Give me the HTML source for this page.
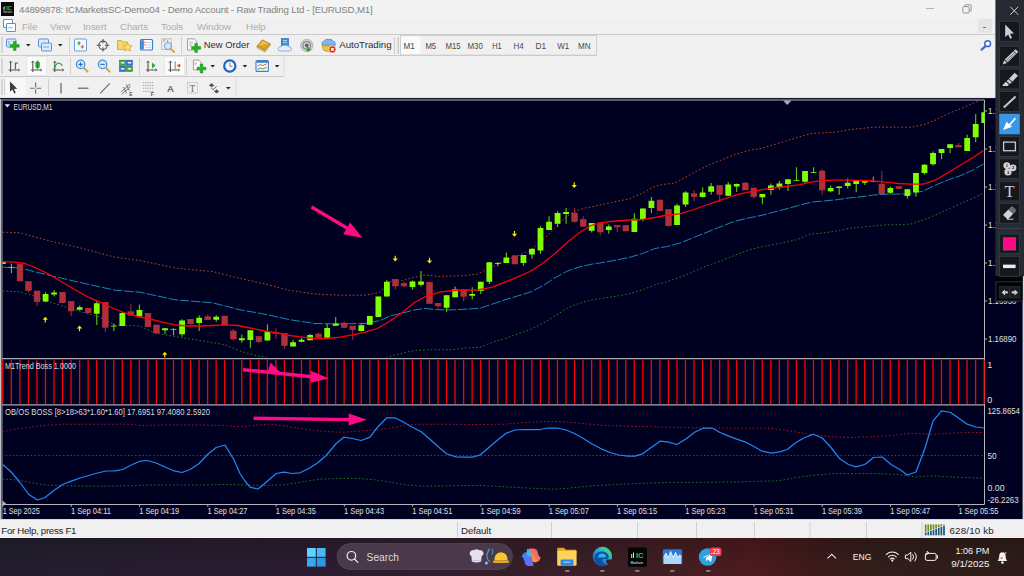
<!DOCTYPE html>
<html lang="en"><head><meta charset="utf-8"><title>EURUSD,M1</title>
<style>
*{box-sizing:border-box;margin:0;padding:0}
html,body{width:1024px;height:576px;overflow:hidden;background:#f0f0f0;font-family:"Liberation Sans",sans-serif}
.abs{position:absolute}
.t{font-family:"Liberation Sans","DejaVu Sans",sans-serif}
#title{left:0;top:0;width:995px;height:18px;background:#f3f3f3}
#title .txt{left:19px;top:3.7px;font-size:9.7px;line-height:12px;color:#828282;white-space:nowrap;letter-spacing:-0.19px}
#menu{left:0;top:18px;width:995px;height:16px;background:#f0f0f0}
#menu span{position:absolute;top:2.6px;font-size:9.7px;line-height:12px;color:#adadad;white-space:nowrap;letter-spacing:-0.1px}
.hl{position:absolute;left:0;width:995px;height:1px;background:#cbcbcb}
.vsep{position:absolute;width:1px;background:#c8c8c8}
.grip{position:absolute;width:2px;border-left:1px solid #bdbdbd;}
.tb{position:absolute;left:0;width:995px;height:21px}
.tf{position:absolute;top:42px;font-size:8.6px;line-height:10px;color:#444;white-space:nowrap}
#status{left:0;top:519px;width:1024px;height:19px;background:#f0f0f0;border-top:1px solid #d8d8d8}
#status span{position:absolute;top:4.6px;font-size:9.7px;line-height:12px;color:#222;white-space:nowrap;letter-spacing:-0.1px}
#task{left:0;top:538px;width:1024px;height:38px;background:linear-gradient(180deg,rgba(0,0,0,.16),rgba(0,0,0,0) 75%),linear-gradient(90deg,#221e2e 0%,#2a1c30 29%,#301e2e 40%,#341e2a 49%,#3e1e24 63%,#4c1a1e 74%,#3c1a1a 80%,#321e1b 85%,#2e1c19 100%)}
#rt{left:995px;top:0;width:29px;height:276px}
.rb{position:absolute;left:4px;width:21px;height:20px;background:#121218;border:1px solid #34343c}
</style></head><body>

<div id="title" class="abs">
 <svg class="abs" style="left:1px;top:2px" width="13" height="14" viewBox="0 0 13 14"><rect width="13" height="14" fill="#0a0a0a"/><text x="5.2" y="7.6" font-size="5.6" font-weight="bold" fill="#35c435" class="t">IC</text><rect x="2.2" y="5" width="0.8" height="2.6" fill="#bbb"/><rect x="3.4" y="4" width="0.8" height="3.6" fill="#bbb"/><text x="2.2" y="11.2" font-size="2.6" fill="#ddd" class="t">Markets</text></svg>
 <div class="abs txt">44899878: ICMarketsSC-Demo04 - Demo Account - Raw Trading Ltd - [EURUSD,M1]</div>
 <div class="abs" style="left:926px;top:8px;width:8px;height:1px;background:#b4b4b4"></div>
 <svg class="abs" style="left:962px;top:4px" width="10" height="10" viewBox="0 0 10 10" fill="none" stroke="#8a8a8a" stroke-width="0.9"><rect x="0.8" y="2.6" width="6.4" height="6.4" rx="1"/><path d="M2.8 2.4 V1.6 Q2.8 0.8 3.8 0.8 H8.2 Q9.2 0.8 9.2 1.8 V6.2 Q9.2 7.2 8.2 7.2 H7.4"/></svg>
</div>
<div id="menu" class="abs">
 <svg class="abs" style="left:3px;top:0px" width="14" height="14" viewBox="0 0 14 14" fill="#fff" stroke="#5b8fd0" stroke-width="1"><rect x="0.5" y="1.5" width="9" height="8" rx="0.5"/><rect x="3.5" y="5.5" width="9" height="8" rx="0.5"/><path d="M5 10.5 l1.5-1.6 1.5 1.6 1.5-1.6" fill="none" stroke-width="0.8"/></svg>
 <span style="left:22px">File</span><span style="left:50px">View</span><span style="left:83px">Insert</span><span style="left:120px">Charts</span><span style="left:161px">Tools</span><span style="left:197px">Window</span><span style="left:246px">Help</span>
 <div class="abs" style="left:978px;top:0.8px;width:14.2px;height:14.2px;background:#e5e5e5"></div>
 <div class="abs" style="left:982.5px;top:9px;width:3px;height:1px;background:#6b7fb0"></div>
</div>
<div class="hl" style="top:34px"></div>
<div class="hl" style="top:55px;width:597px"></div>
<div class="hl" style="top:76px;width:284px"></div>
<div class="abs" style="left:0;top:97px;width:995px;height:1px;background:#e4e4e4"></div>

<svg class="abs" style="left:0;top:35px" width="995" height="63" viewBox="0 35 995 63">
<defs>
 <path id="dd" d="M0 0 h4.6 l-2.3 2.6 z" fill="#222"/>
 <g id="plus"><path d="M3.2 0 h2.6 v3.2 h3.2 v2.6 h-3.2 v3.2 h-2.6 v-3.2 h-3.2 v-2.6 h3.2 z" fill="#21b321" stroke="#158a15" stroke-width="0.5"/></g>
 <g id="axes" fill="none" stroke="#555" stroke-width="1.1"><path d="M2 0 V11 M0 9 H11"/><path d="M0.6 1.6 L2 0 L3.4 1.6 M9.6 7.8 L11 9 L9.6 10.2" stroke-width="0.8"/></g>
</defs>
<!-- grips -->
<g fill="#bcbcbc"><rect x="1.5" y="37" width="1" height="16"/><rect x="1.5" y="58" width="1" height="16"/><rect x="1.5" y="79" width="1" height="16"/><rect x="4" y="79" width="1" height="16" fill="#d0d0d0"/></g>
<!-- separators -->
<g fill="#cfcfcf"><rect x="69" y="37" width="1" height="17"/><rect x="181" y="37" width="1" height="17"/><rect x="394" y="37" width="1" height="17"/><rect x="397.6" y="37" width="1.2" height="17" fill="#c4c4c4"/>
<rect x="70" y="58" width="1" height="17"/><rect x="139" y="58" width="1" height="17"/><rect x="186" y="58" width="1" height="17"/><rect x="283.5" y="56" width="1" height="20" fill="#dcdcdc"/>
<rect x="48" y="79" width="1" height="17"/><rect x="235.5" y="77" width="1" height="20" fill="#dcdcdc"/></g>
<!-- ===== row 1 ===== -->
<!-- new chart -->
<g><rect x="6.5" y="39" width="9.5" height="8" rx="1" fill="#dbe9f9" stroke="#5a93d6"/><path d="M8 42h2M8 44h2" stroke="#5a93d6" stroke-width="0.8"/><use href="#plus" x="10.2" y="41.4"/></g>
<use href="#dd" x="26" y="44"/>
<!-- profiles -->
<g fill="#dbe9f9" stroke="#5a93d6"><rect x="38.5" y="39" width="10" height="8" rx="1"/><rect x="41.5" y="43" width="10" height="8" rx="1"/><path d="M43 47h6" stroke-width="0.8"/></g>
<use href="#dd" x="58" y="44"/>
<!-- market watch -->
<g><rect x="74.5" y="39" width="12" height="12" rx="1" fill="#f4f9ff" stroke="#6aa0dc"/><path d="M77 43.5 l2-2.2 2 2.2 z" fill="#29a329"/><path d="M80.4 46.6 l2 2.2 2-2.2 z" fill="#e05a2a"/><rect x="78.3" y="43.5" width="1.4" height="1.6" fill="#29a329"/><rect x="81.7" y="45" width="1.4" height="1.6" fill="#e05a2a"/></g>
<!-- crosshair -->
<g fill="none" stroke="#555" stroke-width="1.1"><circle cx="103" cy="45.3" r="4.2"/><path d="M103 39v4.2M103 47.4v4.2M96.8 45.3h4.2M105 45.3h4.2"/></g>
<!-- folder star -->
<g><path d="M117.5 40.5 h4 l1 1.4 h5 v7.6 h-10 z" fill="#f6d66b" stroke="#c9a227" stroke-width="0.8"/><path d="M127.6 42.6 l1.4 2.9 3.1 .4 -2.3 2.1 .6 3.1 -2.8 -1.5 -2.8 1.5 .6 -3.1 -2.3 -2.1 3.1 -.4 z" fill="#fbe070" stroke="#c9a227" stroke-width="0.7"/></g>
<!-- navigator -->
<g><rect x="140.5" y="39.5" width="12" height="10.5" rx="1" fill="#fafcff" stroke="#3e7fc8" stroke-width="1.2"/><rect x="141.2" y="40.2" width="2.6" height="9.2" fill="#3e7fc8"/><path d="M145.5 42.5h5.5M145.5 45h5.5M145.5 47.5h5.5" stroke="#b8c4d4" stroke-width="0.7"/><rect x="144.3" y="41.8" width="1" height="1" fill="#d33"/><rect x="144.3" y="44.4" width="1" height="1" fill="#d33"/></g>
<!-- strategy tester -->
<g><rect x="161.8" y="38.8" width="9.5" height="10.8" fill="#f4f0e8" stroke="#b9b2a4" stroke-width="0.8"/><path d="M164 42v-2.2h1.6M167.6 40v2.6" stroke="#6a8fc0" stroke-width="0.8" fill="none"/><circle cx="168" cy="46" r="3.6" fill="#cfe4fa" fill-opacity="0.85" stroke="#6e9fd8" stroke-width="1"/><path d="M170.8 48.8 l3.4 3.2" stroke="#d6a62c" stroke-width="1.8" stroke-linecap="round"/></g>
<!-- new order -->
<g><path d="M187.5 38.8 h6.6 l2.6 2.6 v8.6 h-9.2 z" fill="#fbfbfb" stroke="#8a8a8a" stroke-width="0.8"/><path d="M189.2 42h4M189.2 44h3M189.2 46h3" stroke="#9a9a9a" stroke-width="0.7"/><use href="#plus" x="191.6" y="43.4"/></g>
<text x="203.8" y="48.4" font-size="9.8" fill="#2e2e2e" class="t" textLength="45.6" lengthAdjust="spacingAndGlyphs">New Order</text>
<!-- gold book -->
<g><path d="M257 46.200 l5.400-6.400 7.600 4 -5.200 6.600 z" fill="#d9a424" stroke="#9c7212" stroke-width="0.700"/><path d="M258.600 45.800 l4.400-5 5.400 2.800z" fill="#f0cc5c" fill-opacity="0.8"/><path d="M257 46.200 l.4 1.800 7.600 4 5.400-6.800 -.4-1.400 -5.200 6.600z" fill="#f3dea0" stroke="#9c7212" stroke-width="0.600"/></g>
<!-- person/cloud -->
<g><rect x="281.400" y="38.600" width="7" height="7.200" fill="#3c8fe4" stroke="#2a6cc0" stroke-width="0.700"/><path d="M283 40.600h4M283 42.400h4" stroke="#cfe4fb" stroke-width="0.800"/><path d="M280 51 q-2.400-.4-1.800-2.600 q.6-1.800 2.800-1.400 q1-2.400 3.800-1.600 q2.400-1 3.600 1.400 q3.200-.2 3.200 2.200 q0 1.800-2 2z" fill="#e6eef8" stroke="#7d9fd0" stroke-width="0.800"/></g>
<!-- signals -->
<g fill="none"><circle cx="306.8" cy="45.4" r="6.2" fill="#c9ccd0" stroke="#9aa0a6" stroke-width="0.6"/><circle cx="306.8" cy="45.4" r="4" stroke="#7a8087" stroke-width="1"/><circle cx="306.8" cy="45.4" r="1.8" fill="#5c6268"/><path d="M306.8 45.4 v6.4 a6.4 6.4 0 0 0 4.4-1.8 z" fill="#2fa52f"/></g>
<!-- autotrading -->
<g><path d="M322.6 45.2 q-1.8-3.4 1.8-4.2 q1.2-2.6 4.4-1.6 q3.2-.8 4 1.8 q3.4 .4 2.2 4 z" fill="#7fb6ec" stroke="#3f7fc6" stroke-width="0.7"/><path d="M322 44.6 q3 2 6.6 1.2 q2.6 2.8 6.6-.6 l-1.4 4.600 q-5.800 3.4 -10.600 0 z" fill="#f0c33c" stroke="#b48a1a" stroke-width="0.7"/><circle cx="332.4" cy="49.4" r="3.6" fill="#e0301e" stroke="#fff" stroke-width="0.6"/><rect x="331" y="48" width="2.8" height="2.8" fill="#fff"/></g>
<text x="339.2" y="48.4" font-size="9.8" fill="#2e2e2e" class="t" textLength="52.4" lengthAdjust="spacingAndGlyphs">AutoTrading</text>
<!-- timeframe box -->
<rect x="400.5" y="35.5" width="196" height="19.6" fill="none" stroke="#cdcdcd" stroke-width="0.9"/>
<rect x="401" y="36" width="19.4" height="18" fill="#fafafa"/>
<g font-size="9.2" fill="#4a4a4a" class="t">
<text x="403.4" y="48.8" textLength="11.4" lengthAdjust="spacingAndGlyphs">M1</text>
<text x="425.4" y="48.8" textLength="10.8" lengthAdjust="spacingAndGlyphs">M5</text>
<text x="445.4" y="48.8" textLength="15.2" lengthAdjust="spacingAndGlyphs">M15</text>
<text x="467.4" y="48.8" textLength="15.4" lengthAdjust="spacingAndGlyphs">M30</text>
<text x="492.2" y="48.8" textLength="9.6" lengthAdjust="spacingAndGlyphs">H1</text>
<text x="513.4" y="48.8" textLength="10.2" lengthAdjust="spacingAndGlyphs">H4</text>
<text x="535.4" y="48.8" textLength="10.6" lengthAdjust="spacingAndGlyphs">D1</text>
<text x="557.2" y="48.8" textLength="12" lengthAdjust="spacingAndGlyphs">W1</text>
<text x="578" y="48.8" textLength="12.6" lengthAdjust="spacingAndGlyphs">MN</text>
</g>
<!-- search -->
<g><circle cx="987.7" cy="43.7" r="2.9" fill="#f4f8ff" stroke="#3a68c8" stroke-width="1.5"/><path d="M985.4 46.200 l-3.800 3.400" stroke="#3a68c8" stroke-width="2.200" stroke-linecap="round"/></g>
<!-- ===== row 2 ===== -->
<rect x="26.4" y="56.6" width="20.4" height="19" fill="#fafafa" stroke="#dedede" stroke-width="0.6"/>
<rect x="164.4" y="56.6" width="20" height="19" fill="#fafafa" stroke="#dedede" stroke-width="0.6"/>
<use href="#axes" x="8.600" y="61"/><path d="M15.400 69.600v-6.400h2.400" fill="none" stroke="#1c9a2c" stroke-width="1.3"/>
<use href="#axes" x="30.800" y="61"/><rect x="35.800" y="61.800" width="3.600" height="6" rx="1" fill="#22b534" stroke="#138a22" stroke-width="0.6"/><path d="M37.600 60.400v9" stroke="#138a22" stroke-width="0.8"/>
<use href="#axes" x="52.800" y="61"/><path d="M54 69 q3.600-10 8.400-3.200" fill="none" stroke="#1c9a2c" stroke-width="1.1"/>
<!-- zoom in/out -->
<g><circle cx="80.600" cy="64.400" r="4.200" fill="#d6e9fb" stroke="#4a8fd8" stroke-width="1.3"/><path d="M78.400 64.400h4.400M80.600 62.200v4.400" stroke="#2f74c4" stroke-width="1.2"/><path d="M84 68 l3.600 3.600" stroke="#d7a52a" stroke-width="2" stroke-linecap="round"/></g>
<g><circle cx="102.600" cy="64.400" r="4.200" fill="#d6e9fb" stroke="#4a8fd8" stroke-width="1.3"/><path d="M100.400 64.400h4.400" stroke="#2f74c4" stroke-width="1.200"/><path d="M106 68 l3.600 3.600" stroke="#d7a52a" stroke-width="2" stroke-linecap="round"/></g>
<!-- tile -->
<g stroke-width="0.6"><rect x="119.600" y="60.200" width="6" height="5" fill="#46a83e" stroke="#2a7a26"/><rect x="126.400" y="60.200" width="6" height="5" fill="#3c78d8" stroke="#2454a8"/><rect x="119.600" y="66" width="6" height="5.400" fill="#3c78d8" stroke="#2454a8"/><rect x="126.400" y="66" width="6" height="5.400" fill="#46a83e" stroke="#2a7a26"/><path d="M121 62.800h3.400M127.800 62.800h3.400M121 68.800h3.400M127.800 68.800h3.400" stroke="#e8f0ff" stroke-width="1.400"/></g>
<!-- auto scroll / shift -->
<use href="#axes" x="146" y="61"/><path d="M152 62.400 v6 l3.600-3z" fill="#22b534"/>
<use href="#axes" x="168.400" y="61"/><path d="M175.200 61.400v8" stroke="#4a8fd8" stroke-width="1"/><path d="M180.200 63.400 v4.400 l-3.400-2.200z" fill="#d84a22"/>
<!-- indicators -->
<g><path d="M193.400 60 h5.400 l2.400 2.400 v7.400 h-7.800 z" fill="#fbfbfb" stroke="#8a8a8a" stroke-width="0.800"/><path d="M195 65.400 v-2.600 M195 63 h2" stroke="#999" stroke-width="0.7"/><use href="#plus" x="197" y="64"/></g>
<use href="#dd" x="210.400" y="65"/>
<!-- clock -->
<g><circle cx="229.800" cy="66" r="5.600" fill="#f4f8fc" stroke="#1f63c0" stroke-width="2.200"/><path d="M229.800 62.600v3.600h2.800" fill="none" stroke="#777" stroke-width="0.900"/></g>
<use href="#dd" x="242.600" y="65"/>
<!-- templates -->
<g><rect x="256" y="60.600" width="12.400" height="10.800" rx="1" fill="#f4f9ff" stroke="#3e7fc8" stroke-width="1.100"/><rect x="256.400" y="61" width="11.600" height="1.800" fill="#3e7fc8"/><path d="M257.600 66 l2.600-1.600 2.600 1.200 3.800-1.600" fill="none" stroke="#d8522a" stroke-width="0.9"/><path d="M257.600 69.400 l2.600-1.400 2.600 1 3.800-1.600" fill="none" stroke="#2a9a3a" stroke-width="0.9"/></g>
<use href="#dd" x="274.800" y="65"/>
<!-- ===== row 3 ===== -->
<rect x="5.400" y="78" width="20" height="19" fill="#f8f8f8"/>
<path d="M10 81.400 v10.400 l2.400-2.200 1.800 4 1.600-.8 -1.800-3.800 3.200-.2 z" fill="#3c3c3c"/>
<path d="M35.600 82.600v11.200M30 88.200h11.200" stroke="#6c6c6c" stroke-width="1.100"/><rect x="34.600" y="87.200" width="2" height="2" fill="#f0f0f0"/>
<path d="M61 83v10.400" stroke="#6c6c6c" stroke-width="1.300"/>
<path d="M78 88.200h10.400" stroke="#6c6c6c" stroke-width="1.300"/>
<path d="M100.200 93.400 L109.800 83.400" stroke="#6c6c6c" stroke-width="1.200"/>
<g stroke="#666" stroke-width="0.9" fill="none"><path d="M121 92 l9-8M121.600 94.400 l9-8M123.600 87 l3 6.400 M126.400 84.400 l3 6.400"/></g><text x="129.200" y="95.600" font-size="5" font-weight="bold" fill="#555" class="t">E</text>
<g stroke="#8a8a8a" stroke-width="0.8" stroke-dasharray="1 0.8"><path d="M143 82.600h11M143 85.400h11M143 88.200h11M143 91.400h11"/></g><text x="150.800" y="95.800" font-size="5" font-weight="bold" fill="#555" class="t">F</text>
<text x="167" y="92" font-size="9.6" font-weight="bold" fill="#6a6a6a" class="t">A</text>
<rect x="187.600" y="82.600" width="10" height="10.600" fill="none" stroke="#9a9a9a" stroke-width="0.800" stroke-dasharray="1 1"/><text x="189.400" y="92" font-size="9.500" fill="#6a6a6a" class="t" style="font-family:'Liberation Serif',serif">T</text>
<g fill="#555"><path d="M209 85.400 l2.600-2.400 2.600 2.400 -2.600 1.800z"/><path d="M214 91.600 l2.600-2.400 2.600 2.400 -2.600 1.800z"/><path d="M211.400 87.800 l1.600 2 3.600-3.400" fill="none" stroke="#555" stroke-width="0.9"/></g>
<use href="#dd" x="226" y="87"/>
</svg>

<svg class="chart" width="1024" height="422" viewBox="0 98 1024 422" style="position:absolute;left:0;top:98px">
<rect x="0" y="98" width="1024" height="422" fill="#000020"/>
<rect x="0" y="98" width="1.2" height="422" fill="#c4c4c8"/>
<rect x="0" y="98" width="995" height="1" fill="#1a1a30"/>
<rect x="1022.6" y="276" width="1.4" height="244" fill="#dcdcdc"/>
<defs><clipPath id="cm"><rect x="2.5" y="100.5" width="982" height="257"/></clipPath><clipPath id="ci"><rect x="2.5" y="405.5" width="982" height="99"/></clipPath></defs>
<g stroke="#b4b4bc" stroke-width="1" fill="none">
<path d="M2 100 H984.5"/>
<path d="M2 99.5 V519" stroke="#9a9aa6"/>
<path d="M984.5 100 V504.5"/>
<path d="M2 358.6 H984.5" stroke-width="1.4" stroke="#aaaab4"/>
<path d="M2 404.9 H984.5" stroke-width="1.4" stroke="#aaaab4"/>
<path d="M2 504.5 H984.5"/>
</g>
<g clip-path="url(#cm)">
<polyline points="2.5,232.2 20.0,232.8 50.0,241.0 82.5,248.5 115.0,257.2 140.0,260.5 175.0,268.0 212.5,271.5 240.0,278.5 265.0,284.0 290.0,290.5 315.0,294.0 340.0,295.2 365.0,295.2 380.0,292.2 390.0,281.5 402.5,280.5 415.0,277.2 425.0,275.0 440.0,276.5 452.5,276.0 465.0,275.5 477.5,274.0 492.5,266.8 505.0,260.5 517.5,255.8 530.0,250.5 542.5,240.5 555.0,227.8 565.0,217.8 575.0,211.2 585.0,208.0 595.0,206.2 605.0,203.8 617.5,201.2 630.0,198.8 642.5,193.0 655.0,186.2 662.5,184.5 675.0,183.0 685.0,177.5 697.5,170.5 710.0,164.5 722.5,159.5 736.0,154.0 748.5,150.5 761.0,148.5 773.5,144.8 786.0,141.0 798.5,137.2 811.0,133.5 823.5,132.8 836.0,132.2 848.5,129.8 861.0,128.5 873.5,127.2 886.0,127.2 898.5,127.2 911.0,127.2 923.5,124.8 936.0,119.8 948.5,113.5 961.0,108.5 973.5,103.0 979.8,100.5" fill="none" stroke="#b84a1a" stroke-width="1" stroke-dasharray="1.6 2.2"/>
<polyline points="2.5,291.0 20.0,291.8 32.5,295.5 50.0,302.2 82.5,312.2 100.0,317.2 115.0,325.2 140.0,326.0 155.0,333.0 175.0,336.5 200.0,340.5 225.0,344.8 240.0,351.0 255.0,355.5 268.0,357.5" fill="none" stroke="#247e2a" stroke-width="1" stroke-dasharray="1.6 2.2"/>
<polyline points="386.0,357.5 390.0,356.5 402.5,353.0 415.0,350.5 427.5,349.8 452.5,349.8 465.0,348.0 480.0,347.2 492.5,342.2 505.0,338.5 517.5,334.0 530.0,329.8 542.5,323.5 555.0,316.0 567.5,308.0 580.0,303.0 592.5,299.8 605.0,298.0 617.5,296.0 630.0,293.5 642.5,289.8 655.0,284.8 667.5,281.5 680.0,277.2 692.5,272.2 705.0,266.5 717.5,262.2 730.0,257.2 736.0,254.8 748.5,250.0 761.0,247.0 773.5,244.5 786.0,242.0 796.0,240.0 811.0,234.0 823.5,233.0 836.0,231.0 848.5,228.5 861.0,227.2 873.5,226.0 886.0,224.8 898.5,224.8 911.0,224.0 923.5,219.8 936.0,214.8 948.5,209.0 961.0,203.5 973.5,198.0 983.5,193.0" fill="none" stroke="#247e2a" stroke-width="1" stroke-dasharray="1.6 2.2"/>
<polyline points="2.5,267.2 20.0,268.0 50.0,275.5 82.5,283.0 115.0,290.2 140.0,292.2 175.0,299.8 212.5,302.8 240.0,309.8 265.0,314.2 290.0,319.8 315.0,323.5 340.0,324.0 365.0,323.5 380.0,320.5 390.0,316.0 402.5,313.0 415.0,309.8 425.0,308.5 440.0,309.8 452.5,309.8 465.0,309.2 480.0,308.2 492.5,304.0 505.0,299.8 517.5,296.0 530.0,292.2 542.5,286.0 555.0,277.8 567.5,271.0 580.0,266.8 592.5,264.0 605.0,262.2 617.5,259.8 630.0,257.2 642.5,253.5 655.0,248.5 667.5,246.5 680.0,243.0 692.5,238.0 705.0,233.0 717.5,228.0 730.0,223.0 736.0,221.0 748.5,218.0 761.0,215.5 773.5,212.2 786.0,209.0 798.5,205.5 811.0,202.2 823.5,201.0 836.0,199.8 848.5,198.0 861.0,196.8 873.5,195.0 886.0,194.2 898.5,194.0 911.0,193.5 923.5,191.0 936.0,184.8 948.5,179.8 961.0,175.5 973.5,169.8 983.5,164.0" fill="none" stroke="#1787b2" stroke-width="1" stroke-dasharray="9.5 1.8"/>
<rect x="2.35" y="261.75" width="1.1" height="2.25" fill="#60c810"/>
<rect x="0.00" y="261.75" width="5.8" height="2.25" fill="#80ff00"/>
<rect x="10.88" y="263.50" width="1.1" height="9.50" fill="#60c810"/>
<rect x="8.53" y="266.90" width="5.8" height="0.80" fill="#80ff00"/>
<rect x="19.42" y="264.25" width="1.1" height="16.75" fill="#962c3c"/>
<rect x="17.07" y="264.25" width="5.8" height="16.75" fill="#aa3238" stroke="#c82a40" stroke-width="0.5"/>
<rect x="27.95" y="281.50" width="1.1" height="11.00" fill="#962c3c"/>
<rect x="25.60" y="281.50" width="5.8" height="9.00" fill="#aa3238" stroke="#c82a40" stroke-width="0.5"/>
<rect x="36.48" y="291.00" width="1.1" height="15.00" fill="#962c3c"/>
<rect x="34.13" y="291.00" width="5.8" height="10.75" fill="#aa3238" stroke="#c82a40" stroke-width="0.5"/>
<rect x="45.02" y="292.25" width="1.1" height="10.00" fill="#60c810"/>
<rect x="42.67" y="294.00" width="5.8" height="7.50" fill="#80ff00"/>
<rect x="53.55" y="290.00" width="1.1" height="6.50" fill="#60c810"/>
<rect x="51.20" y="292.50" width="5.8" height="2.00" fill="#80ff00"/>
<rect x="62.08" y="292.25" width="1.1" height="10.50" fill="#962c3c"/>
<rect x="59.73" y="292.25" width="5.8" height="10.50" fill="#aa3238" stroke="#c82a40" stroke-width="0.5"/>
<rect x="70.62" y="301.25" width="1.1" height="14.75" fill="#962c3c"/>
<rect x="68.27" y="301.25" width="5.8" height="9.75" fill="#aa3238" stroke="#c82a40" stroke-width="0.5"/>
<rect x="79.15" y="305.50" width="1.1" height="5.00" fill="#60c810"/>
<rect x="76.80" y="307.25" width="5.8" height="2.50" fill="#80ff00"/>
<rect x="87.68" y="308.25" width="1.1" height="5.75" fill="#962c3c"/>
<rect x="85.33" y="308.25" width="5.8" height="4.50" fill="#aa3238" stroke="#c82a40" stroke-width="0.5"/>
<rect x="96.22" y="301.00" width="1.1" height="24.00" fill="#60c810"/>
<rect x="93.87" y="303.25" width="5.8" height="10.50" fill="#80ff00"/>
<rect x="104.75" y="302.25" width="1.1" height="30.00" fill="#962c3c"/>
<rect x="102.40" y="302.25" width="5.8" height="25.00" fill="#aa3238" stroke="#c82a40" stroke-width="0.5"/>
<rect x="113.28" y="323.50" width="1.1" height="7.50" fill="#60c810"/>
<rect x="110.93" y="325.70" width="5.8" height="0.80" fill="#80ff00"/>
<rect x="121.82" y="312.25" width="1.1" height="13.75" fill="#60c810"/>
<rect x="119.47" y="313.00" width="5.8" height="13.00" fill="#80ff00"/>
<rect x="130.35" y="304.00" width="1.1" height="11.25" fill="#962c3c"/>
<rect x="128.00" y="311.75" width="5.8" height="3.50" fill="#aa3238" stroke="#c82a40" stroke-width="0.5"/>
<rect x="138.88" y="304.50" width="1.1" height="13.25" fill="#60c810"/>
<rect x="136.53" y="310.00" width="5.8" height="6.50" fill="#80ff00"/>
<rect x="147.42" y="313.25" width="1.1" height="13.50" fill="#962c3c"/>
<rect x="145.07" y="313.25" width="5.8" height="13.50" fill="#aa3238" stroke="#c82a40" stroke-width="0.5"/>
<rect x="155.95" y="325.00" width="1.1" height="9.25" fill="#962c3c"/>
<rect x="153.60" y="325.00" width="5.8" height="8.00" fill="#aa3238" stroke="#c82a40" stroke-width="0.5"/>
<rect x="164.48" y="328.25" width="1.1" height="5.75" fill="#60c810"/>
<rect x="162.13" y="328.25" width="5.8" height="2.00" fill="#80ff00"/>
<rect x="173.02" y="328.50" width="1.1" height="7.00" fill="#60c810"/>
<rect x="170.67" y="328.90" width="5.8" height="0.80" fill="#80ff00"/>
<rect x="181.55" y="319.25" width="1.1" height="17.25" fill="#60c810"/>
<rect x="179.20" y="320.50" width="5.8" height="13.75" fill="#80ff00"/>
<rect x="190.08" y="319.25" width="1.1" height="5.75" fill="#962c3c"/>
<rect x="187.73" y="319.25" width="5.8" height="4.50" fill="#aa3238" stroke="#c82a40" stroke-width="0.5"/>
<rect x="198.62" y="315.50" width="1.1" height="15.50" fill="#60c810"/>
<rect x="196.27" y="317.75" width="5.8" height="5.25" fill="#80ff00"/>
<rect x="207.15" y="314.50" width="1.1" height="5.25" fill="#962c3c"/>
<rect x="204.80" y="316.75" width="5.8" height="3.00" fill="#aa3238" stroke="#c82a40" stroke-width="0.5"/>
<rect x="215.68" y="315.25" width="1.1" height="6.50" fill="#60c810"/>
<rect x="213.33" y="316.75" width="5.8" height="3.00" fill="#80ff00"/>
<rect x="224.22" y="316.00" width="1.1" height="9.25" fill="#962c3c"/>
<rect x="221.87" y="316.00" width="5.8" height="9.25" fill="#aa3238" stroke="#c82a40" stroke-width="0.5"/>
<rect x="232.75" y="329.00" width="1.1" height="11.25" fill="#962c3c"/>
<rect x="230.40" y="331.00" width="5.8" height="8.00" fill="#aa3238" stroke="#c82a40" stroke-width="0.5"/>
<rect x="241.28" y="334.50" width="1.1" height="8.25" fill="#60c810"/>
<rect x="238.93" y="338.25" width="5.8" height="2.00" fill="#80ff00"/>
<rect x="249.82" y="330.25" width="1.1" height="17.50" fill="#60c810"/>
<rect x="247.47" y="330.25" width="5.8" height="9.75" fill="#80ff00"/>
<rect x="258.35" y="336.50" width="1.1" height="7.00" fill="#962c3c"/>
<rect x="256.00" y="336.50" width="5.8" height="5.25" fill="#aa3238" stroke="#c82a40" stroke-width="0.5"/>
<rect x="266.88" y="324.25" width="1.1" height="16.25" fill="#60c810"/>
<rect x="264.53" y="331.00" width="5.8" height="9.50" fill="#80ff00"/>
<rect x="275.42" y="328.50" width="1.1" height="10.50" fill="#962c3c"/>
<rect x="273.07" y="332.50" width="5.8" height="1.00" fill="#aa3238" stroke="#c82a40" stroke-width="0.5"/>
<rect x="283.95" y="333.50" width="1.1" height="15.00" fill="#962c3c"/>
<rect x="281.60" y="333.50" width="5.8" height="12.00" fill="#aa3238" stroke="#c82a40" stroke-width="0.5"/>
<rect x="292.48" y="339.75" width="1.1" height="6.75" fill="#60c810"/>
<rect x="290.13" y="342.25" width="5.8" height="4.25" fill="#80ff00"/>
<rect x="301.02" y="337.25" width="1.1" height="5.00" fill="#60c810"/>
<rect x="298.67" y="339.75" width="5.8" height="2.00" fill="#80ff00"/>
<rect x="309.55" y="334.00" width="1.1" height="6.25" fill="#60c810"/>
<rect x="307.20" y="335.00" width="5.8" height="5.25" fill="#80ff00"/>
<rect x="318.08" y="332.75" width="1.1" height="5.25" fill="#962c3c"/>
<rect x="315.73" y="334.00" width="5.8" height="3.25" fill="#aa3238" stroke="#c82a40" stroke-width="0.5"/>
<rect x="326.62" y="324.00" width="1.1" height="13.75" fill="#60c810"/>
<rect x="324.27" y="328.00" width="5.8" height="9.75" fill="#80ff00"/>
<rect x="335.15" y="317.00" width="1.1" height="9.00" fill="#60c810"/>
<rect x="332.80" y="323.50" width="5.8" height="2.25" fill="#80ff00"/>
<rect x="343.68" y="321.50" width="1.1" height="6.50" fill="#962c3c"/>
<rect x="341.33" y="323.00" width="5.8" height="4.50" fill="#aa3238" stroke="#c82a40" stroke-width="0.5"/>
<rect x="352.22" y="326.00" width="1.1" height="13.75" fill="#962c3c"/>
<rect x="349.87" y="326.00" width="5.8" height="3.75" fill="#aa3238" stroke="#c82a40" stroke-width="0.5"/>
<rect x="360.75" y="324.00" width="1.1" height="7.50" fill="#60c810"/>
<rect x="358.40" y="325.25" width="5.8" height="5.75" fill="#80ff00"/>
<rect x="369.28" y="316.00" width="1.1" height="8.75" fill="#60c810"/>
<rect x="366.93" y="316.00" width="5.8" height="8.75" fill="#80ff00"/>
<rect x="377.82" y="296.50" width="1.1" height="20.50" fill="#60c810"/>
<rect x="375.47" y="296.50" width="5.8" height="20.50" fill="#80ff00"/>
<rect x="386.35" y="279.75" width="1.1" height="16.75" fill="#60c810"/>
<rect x="384.00" y="281.75" width="5.8" height="14.75" fill="#80ff00"/>
<rect x="394.88" y="279.25" width="1.1" height="10.00" fill="#962c3c"/>
<rect x="392.53" y="279.25" width="5.8" height="6.75" fill="#aa3238" stroke="#c82a40" stroke-width="0.5"/>
<rect x="403.42" y="281.50" width="1.1" height="5.75" fill="#962c3c"/>
<rect x="401.07" y="283.50" width="5.8" height="2.50" fill="#aa3238" stroke="#c82a40" stroke-width="0.5"/>
<rect x="411.95" y="280.50" width="1.1" height="9.00" fill="#60c810"/>
<rect x="409.60" y="281.50" width="5.8" height="5.50" fill="#80ff00"/>
<rect x="420.48" y="271.00" width="1.1" height="15.50" fill="#60c810"/>
<rect x="418.13" y="281.50" width="5.8" height="3.25" fill="#80ff00"/>
<rect x="429.01" y="282.25" width="1.1" height="21.25" fill="#962c3c"/>
<rect x="426.67" y="282.25" width="5.8" height="21.25" fill="#aa3238" stroke="#c82a40" stroke-width="0.5"/>
<rect x="437.55" y="303.25" width="1.1" height="5.25" fill="#962c3c"/>
<rect x="435.20" y="303.25" width="5.8" height="2.75" fill="#aa3238" stroke="#c82a40" stroke-width="0.5"/>
<rect x="446.08" y="295.25" width="1.1" height="17.00" fill="#60c810"/>
<rect x="443.73" y="295.25" width="5.8" height="12.50" fill="#80ff00"/>
<rect x="454.61" y="286.50" width="1.1" height="10.75" fill="#60c810"/>
<rect x="452.26" y="289.25" width="5.8" height="8.00" fill="#80ff00"/>
<rect x="463.15" y="289.75" width="1.1" height="11.75" fill="#962c3c"/>
<rect x="460.80" y="289.75" width="5.8" height="6.75" fill="#aa3238" stroke="#c82a40" stroke-width="0.5"/>
<rect x="471.68" y="287.25" width="1.1" height="12.00" fill="#60c810"/>
<rect x="469.33" y="294.00" width="5.8" height="1.75" fill="#80ff00"/>
<rect x="480.21" y="281.75" width="1.1" height="12.25" fill="#60c810"/>
<rect x="477.86" y="281.75" width="5.8" height="9.25" fill="#80ff00"/>
<rect x="488.75" y="262.25" width="1.1" height="21.75" fill="#60c810"/>
<rect x="486.40" y="262.25" width="5.8" height="19.50" fill="#80ff00"/>
<rect x="497.28" y="262.00" width="1.1" height="4.25" fill="#60c810"/>
<rect x="494.93" y="263.10" width="5.8" height="0.90" fill="#80ff00"/>
<rect x="505.81" y="252.50" width="1.1" height="10.50" fill="#60c810"/>
<rect x="503.46" y="257.50" width="5.8" height="5.50" fill="#80ff00"/>
<rect x="514.35" y="255.75" width="1.1" height="8.25" fill="#962c3c"/>
<rect x="512.00" y="255.75" width="5.8" height="8.25" fill="#aa3238" stroke="#c82a40" stroke-width="0.5"/>
<rect x="522.88" y="255.00" width="1.1" height="10.75" fill="#60c810"/>
<rect x="520.53" y="255.00" width="5.8" height="8.00" fill="#80ff00"/>
<rect x="531.41" y="248.75" width="1.1" height="10.00" fill="#60c810"/>
<rect x="529.06" y="248.75" width="5.8" height="5.75" fill="#80ff00"/>
<rect x="539.95" y="226.25" width="1.1" height="27.50" fill="#60c810"/>
<rect x="537.60" y="228.00" width="5.8" height="22.50" fill="#80ff00"/>
<rect x="548.48" y="216.25" width="1.1" height="13.75" fill="#60c810"/>
<rect x="546.13" y="221.75" width="5.8" height="8.25" fill="#80ff00"/>
<rect x="557.01" y="211.25" width="1.1" height="15.75" fill="#60c810"/>
<rect x="554.66" y="213.00" width="5.8" height="10.75" fill="#80ff00"/>
<rect x="565.55" y="208.00" width="1.1" height="15.75" fill="#60c810"/>
<rect x="563.20" y="212.00" width="5.8" height="2.00" fill="#80ff00"/>
<rect x="574.08" y="208.00" width="1.1" height="14.50" fill="#962c3c"/>
<rect x="571.73" y="213.00" width="5.8" height="8.50" fill="#aa3238" stroke="#c82a40" stroke-width="0.5"/>
<rect x="582.61" y="216.25" width="1.1" height="10.75" fill="#962c3c"/>
<rect x="580.26" y="219.50" width="5.8" height="6.75" fill="#aa3238" stroke="#c82a40" stroke-width="0.5"/>
<rect x="591.15" y="223.00" width="1.1" height="9.50" fill="#60c810"/>
<rect x="588.80" y="223.00" width="5.8" height="7.75" fill="#80ff00"/>
<rect x="599.68" y="223.00" width="1.1" height="12.50" fill="#962c3c"/>
<rect x="597.33" y="223.00" width="5.8" height="9.00" fill="#aa3238" stroke="#c82a40" stroke-width="0.5"/>
<rect x="608.21" y="224.50" width="1.1" height="9.25" fill="#60c810"/>
<rect x="605.86" y="226.50" width="5.8" height="3.50" fill="#80ff00"/>
<rect x="616.75" y="225.50" width="1.1" height="6.50" fill="#962c3c"/>
<rect x="614.40" y="225.50" width="5.8" height="1.50" fill="#aa3238" stroke="#c82a40" stroke-width="0.5"/>
<rect x="625.28" y="225.50" width="1.1" height="5.50" fill="#962c3c"/>
<rect x="622.93" y="225.50" width="5.8" height="5.50" fill="#aa3238" stroke="#c82a40" stroke-width="0.5"/>
<rect x="633.81" y="213.25" width="1.1" height="18.75" fill="#60c810"/>
<rect x="631.46" y="218.75" width="5.8" height="13.25" fill="#80ff00"/>
<rect x="642.35" y="208.50" width="1.1" height="12.75" fill="#60c810"/>
<rect x="640.00" y="208.50" width="5.8" height="11.00" fill="#80ff00"/>
<rect x="650.88" y="197.00" width="1.1" height="16.00" fill="#60c810"/>
<rect x="648.53" y="200.75" width="5.8" height="7.25" fill="#80ff00"/>
<rect x="659.41" y="200.00" width="1.1" height="10.75" fill="#962c3c"/>
<rect x="657.06" y="200.00" width="5.8" height="10.75" fill="#aa3238" stroke="#c82a40" stroke-width="0.5"/>
<rect x="667.95" y="209.50" width="1.1" height="17.50" fill="#962c3c"/>
<rect x="665.60" y="209.50" width="5.8" height="16.25" fill="#aa3238" stroke="#c82a40" stroke-width="0.5"/>
<rect x="676.48" y="203.75" width="1.1" height="21.25" fill="#60c810"/>
<rect x="674.13" y="205.50" width="5.8" height="19.50" fill="#80ff00"/>
<rect x="685.01" y="191.25" width="1.1" height="15.75" fill="#60c810"/>
<rect x="682.66" y="192.50" width="5.8" height="12.00" fill="#80ff00"/>
<rect x="693.55" y="190.00" width="1.1" height="11.25" fill="#962c3c"/>
<rect x="691.20" y="193.75" width="5.8" height="3.00" fill="#aa3238" stroke="#c82a40" stroke-width="0.5"/>
<rect x="702.08" y="187.50" width="1.1" height="10.00" fill="#60c810"/>
<rect x="699.73" y="192.50" width="5.8" height="4.50" fill="#80ff00"/>
<rect x="710.61" y="183.00" width="1.1" height="11.50" fill="#60c810"/>
<rect x="708.26" y="186.25" width="5.8" height="5.50" fill="#80ff00"/>
<rect x="719.15" y="185.50" width="1.1" height="17.00" fill="#962c3c"/>
<rect x="716.80" y="185.50" width="5.8" height="9.00" fill="#aa3238" stroke="#c82a40" stroke-width="0.5"/>
<rect x="727.68" y="182.00" width="1.1" height="14.25" fill="#60c810"/>
<rect x="725.33" y="184.50" width="5.8" height="11.25" fill="#80ff00"/>
<rect x="736.21" y="183.50" width="1.1" height="8.50" fill="#60c810"/>
<rect x="733.86" y="184.00" width="5.8" height="2.50" fill="#80ff00"/>
<rect x="744.75" y="182.00" width="1.1" height="8.00" fill="#962c3c"/>
<rect x="742.40" y="183.00" width="5.8" height="7.00" fill="#aa3238" stroke="#c82a40" stroke-width="0.5"/>
<rect x="753.28" y="188.00" width="1.1" height="10.50" fill="#962c3c"/>
<rect x="750.93" y="188.00" width="5.8" height="8.75" fill="#aa3238" stroke="#c82a40" stroke-width="0.5"/>
<rect x="761.81" y="194.00" width="1.1" height="10.25" fill="#60c810"/>
<rect x="759.46" y="194.00" width="5.8" height="3.25" fill="#80ff00"/>
<rect x="770.35" y="183.50" width="1.1" height="11.25" fill="#60c810"/>
<rect x="768.00" y="185.50" width="5.8" height="4.50" fill="#80ff00"/>
<rect x="778.88" y="181.00" width="1.1" height="8.75" fill="#60c810"/>
<rect x="776.53" y="183.50" width="5.8" height="4.00" fill="#80ff00"/>
<rect x="787.41" y="179.25" width="1.1" height="11.75" fill="#60c810"/>
<rect x="785.06" y="179.25" width="5.8" height="4.75" fill="#80ff00"/>
<rect x="795.95" y="167.25" width="1.1" height="13.75" fill="#60c810"/>
<rect x="793.60" y="179.90" width="5.8" height="0.80" fill="#80ff00"/>
<rect x="804.48" y="171.00" width="1.1" height="12.50" fill="#60c810"/>
<rect x="802.13" y="171.00" width="5.8" height="10.75" fill="#80ff00"/>
<rect x="813.01" y="167.25" width="1.1" height="5.65" fill="#60c810"/>
<rect x="810.66" y="172.20" width="5.8" height="0.80" fill="#80ff00"/>
<rect x="821.55" y="169.25" width="1.1" height="25.50" fill="#962c3c"/>
<rect x="819.20" y="171.00" width="5.8" height="19.00" fill="#aa3238" stroke="#c82a40" stroke-width="0.5"/>
<rect x="830.08" y="185.50" width="1.1" height="6.75" fill="#60c810"/>
<rect x="827.73" y="188.00" width="5.8" height="3.25" fill="#80ff00"/>
<rect x="838.61" y="186.50" width="1.1" height="8.25" fill="#60c810"/>
<rect x="836.26" y="186.50" width="5.8" height="1.50" fill="#80ff00"/>
<rect x="847.15" y="178.50" width="1.1" height="10.00" fill="#60c810"/>
<rect x="844.80" y="182.75" width="5.8" height="3.25" fill="#80ff00"/>
<rect x="855.68" y="181.00" width="1.1" height="11.25" fill="#60c810"/>
<rect x="853.33" y="181.00" width="5.8" height="3.00" fill="#80ff00"/>
<rect x="864.21" y="180.50" width="1.1" height="4.50" fill="#60c810"/>
<rect x="861.86" y="181.00" width="5.8" height="1.75" fill="#80ff00"/>
<rect x="872.75" y="176.75" width="1.1" height="5.50" fill="#60c810"/>
<rect x="870.40" y="181.20" width="5.8" height="0.80" fill="#80ff00"/>
<rect x="881.28" y="171.00" width="1.1" height="23.00" fill="#962c3c"/>
<rect x="878.93" y="184.00" width="5.8" height="10.00" fill="#aa3238" stroke="#c82a40" stroke-width="0.5"/>
<rect x="889.81" y="186.50" width="1.1" height="7.75" fill="#60c810"/>
<rect x="887.46" y="188.00" width="5.8" height="4.75" fill="#80ff00"/>
<rect x="898.35" y="186.50" width="1.1" height="2.00" fill="#962c3c"/>
<rect x="896.00" y="186.50" width="5.8" height="2.00" fill="#aa3238" stroke="#c82a40" stroke-width="0.5"/>
<rect x="906.88" y="189.25" width="1.1" height="9.25" fill="#60c810"/>
<rect x="904.53" y="189.25" width="5.8" height="6.75" fill="#80ff00"/>
<rect x="915.41" y="173.00" width="1.1" height="23.75" fill="#60c810"/>
<rect x="913.06" y="173.00" width="5.8" height="19.25" fill="#80ff00"/>
<rect x="923.95" y="164.00" width="1.1" height="10.75" fill="#60c810"/>
<rect x="921.60" y="164.75" width="5.8" height="8.25" fill="#80ff00"/>
<rect x="932.48" y="151.50" width="1.1" height="14.00" fill="#60c810"/>
<rect x="930.13" y="153.00" width="5.8" height="11.25" fill="#80ff00"/>
<rect x="941.01" y="149.00" width="1.1" height="10.25" fill="#60c810"/>
<rect x="938.66" y="149.00" width="5.8" height="4.00" fill="#80ff00"/>
<rect x="949.55" y="144.25" width="1.1" height="8.75" fill="#60c810"/>
<rect x="947.20" y="144.25" width="5.8" height="3.75" fill="#80ff00"/>
<rect x="958.08" y="143.00" width="1.1" height="4.00" fill="#962c3c"/>
<rect x="955.73" y="145.50" width="5.8" height="1.50" fill="#aa3238" stroke="#c82a40" stroke-width="0.5"/>
<rect x="966.61" y="134.75" width="1.1" height="16.25" fill="#60c810"/>
<rect x="964.26" y="138.00" width="5.8" height="13.00" fill="#80ff00"/>
<rect x="975.15" y="114.00" width="1.1" height="28.25" fill="#60c810"/>
<rect x="972.80" y="124.00" width="5.8" height="13.25" fill="#80ff00"/>
<rect x="983.68" y="103.00" width="1.1" height="20.00" fill="#60c810"/>
<rect x="981.33" y="112.25" width="5.8" height="10.75" fill="#80ff00"/>
<polyline points="2.5,261.8 12.5,261.8 25.0,263.5 37.5,268.5 50.0,274.8 62.5,282.2 75.0,289.8 87.5,296.8 100.0,302.2 112.5,308.0 125.0,313.0 137.5,316.5 150.0,319.0 162.5,322.2 175.0,324.8 187.5,326.0 200.0,326.0 212.5,325.5 225.0,324.8 237.5,325.5 252.5,328.5 265.0,331.0 277.5,333.0 290.0,335.5 302.5,337.2 315.0,338.5 327.5,338.5 340.0,337.2 352.5,334.8 365.0,332.2 377.5,328.5 390.0,321.0 402.5,312.2 415.0,302.2 427.5,295.5 440.0,292.2 452.5,290.5 465.0,290.0 477.5,290.0 492.5,287.2 505.0,282.2 517.5,277.2 530.0,271.5 542.5,263.5 555.0,253.5 567.5,242.2 580.0,232.2 590.0,226.0 600.0,222.8 610.0,221.5 630.0,220.0 642.5,219.5 655.0,217.5 667.5,215.0 680.0,213.8 692.5,210.0 705.0,205.5 717.5,201.2 730.0,197.0 736.0,194.8 748.5,192.2 761.0,189.8 773.5,188.0 786.0,186.5 798.5,184.8 811.0,182.2 823.5,180.5 836.0,180.2 848.5,180.2 861.0,180.5 873.5,181.0 886.0,182.2 898.5,183.5 911.0,184.2 923.5,184.2 936.0,179.8 948.5,172.2 961.0,164.8 973.5,157.2 983.5,150.5" fill="none" stroke="#fa0008" stroke-width="1.3" stroke-linejoin="round"/>
<path d="M45.25 316.75 L42.65 319.75 H44.65 V322.55 H45.85 V319.75 H47.85 Z" fill="#ffe800"/>
<path d="M79.5 325.5 L76.9 328.5 H78.9 V331.3 H80.1 V328.5 H82.1 Z" fill="#ffe800"/>
<path d="M164.75 351.75 L162.15 354.75 H164.15 V357.55 H165.35 V354.75 H167.35 Z" fill="#ffe800"/>
<path d="M395.25 261.5 L392.65 258.5 H394.65 V255.7 H395.85 V258.5 H397.85 Z" fill="#ffe800"/>
<path d="M429.5 263.5 L426.9 260.5 H428.9 V257.7 H430.1 V260.5 H432.1 Z" fill="#ffe800"/>
<path d="M514.5 236.75 L511.9 233.75 H513.9 V230.95 H515.1 V233.75 H517.1 Z" fill="#ffe800"/>
<path d="M574.25 188 L571.65 185 H573.65 V182.2 H574.85 V185 H576.85 Z" fill="#ffe800"/>
</g>
<path d="M783 100.5 H791.5 L787.25 105 Z" fill="#a8a8b8"/>
<path d="M4.6 104.3 H10 L7.3 107.6 Z" fill="#e8e8e8"/>
<text x="13.5" y="110" font-size="8.6" fill="#d8d8d8" class="t" textLength="39" lengthAdjust="spacingAndGlyphs">EURUSD,M1</text>
<path d="M311.5 207 L352 231" stroke="#ff0a84" stroke-width="3.2" stroke-linecap="butt"/>
<path d="M362.5 238 L343.2 234.2 L350.2 222.6 Z" fill="#ff0a84"/>
<rect x="985" y="110.5" width="2" height="1" fill="#b4b4bc"/>
<rect x="985" y="148.5" width="2" height="1" fill="#b4b4bc"/>
<rect x="985" y="186.5" width="2" height="1" fill="#b4b4bc"/>
<rect x="985" y="224.5" width="2" height="1" fill="#b4b4bc"/>
<rect x="985" y="262.5" width="2" height="1" fill="#b4b4bc"/>
<rect x="985" y="300.5" width="2" height="1" fill="#b4b4bc"/>
<rect x="985" y="338.5" width="2" height="1" fill="#b4b4bc"/>
<text x="988" y="114.2" font-size="9" fill="#e0e0e0" class="t" textLength="28.5" lengthAdjust="spacingAndGlyphs">1.17130</text>
<text x="988" y="152.2" font-size="9" fill="#e0e0e0" class="t" textLength="28.5" lengthAdjust="spacingAndGlyphs">1.17090</text>
<text x="988" y="190.2" font-size="9" fill="#e0e0e0" class="t" textLength="28.5" lengthAdjust="spacingAndGlyphs">1.17050</text>
<text x="988" y="228.2" font-size="9" fill="#e0e0e0" class="t" textLength="28.5" lengthAdjust="spacingAndGlyphs">1.17010</text>
<text x="988" y="266.2" font-size="9" fill="#e0e0e0" class="t" textLength="28.5" lengthAdjust="spacingAndGlyphs">1.16970</text>
<text x="988" y="304.2" font-size="9" fill="#e0e0e0" class="t" textLength="28.5" lengthAdjust="spacingAndGlyphs">1.16930</text>
<text x="988" y="342.2" font-size="9" fill="#e0e0e0" class="t" textLength="28.5" lengthAdjust="spacingAndGlyphs">1.16890</text>
<g>
<rect x="2.15" y="359.6" width="1.3" height="44.6" fill="#fa0000"/>
<rect x="10.68" y="359.6" width="1.3" height="44.6" fill="#fa0000"/>
<rect x="19.22" y="359.6" width="1.3" height="44.6" fill="#fa0000"/>
<rect x="27.75" y="359.6" width="1.3" height="44.6" fill="#fa0000"/>
<rect x="36.28" y="359.6" width="1.3" height="44.6" fill="#fa0000"/>
<rect x="44.82" y="359.6" width="1.3" height="44.6" fill="#fa0000"/>
<rect x="53.35" y="359.6" width="1.3" height="44.6" fill="#fa0000"/>
<rect x="61.88" y="359.6" width="1.3" height="44.6" fill="#fa0000"/>
<rect x="70.42" y="359.6" width="1.3" height="44.6" fill="#fa0000"/>
<rect x="78.95" y="359.6" width="1.3" height="44.6" fill="#fa0000"/>
<rect x="87.48" y="359.6" width="1.3" height="44.6" fill="#fa0000"/>
<rect x="96.02" y="359.6" width="1.3" height="44.6" fill="#fa0000"/>
<rect x="104.55" y="359.6" width="1.3" height="44.6" fill="#fa0000"/>
<rect x="113.08" y="359.6" width="1.3" height="44.6" fill="#fa0000"/>
<rect x="121.62" y="359.6" width="1.3" height="44.6" fill="#fa0000"/>
<rect x="130.15" y="359.6" width="1.3" height="44.6" fill="#fa0000"/>
<rect x="138.68" y="359.6" width="1.3" height="44.6" fill="#fa0000"/>
<rect x="147.22" y="359.6" width="1.3" height="44.6" fill="#fa0000"/>
<rect x="155.75" y="359.6" width="1.3" height="44.6" fill="#fa0000"/>
<rect x="164.28" y="359.6" width="1.3" height="44.6" fill="#fa0000"/>
<rect x="172.82" y="359.6" width="1.3" height="44.6" fill="#fa0000"/>
<rect x="181.35" y="359.6" width="1.3" height="44.6" fill="#fa0000"/>
<rect x="189.88" y="359.6" width="1.3" height="44.6" fill="#fa0000"/>
<rect x="198.42" y="359.6" width="1.3" height="44.6" fill="#fa0000"/>
<rect x="206.95" y="359.6" width="1.3" height="44.6" fill="#fa0000"/>
<rect x="215.48" y="359.6" width="1.3" height="44.6" fill="#fa0000"/>
<rect x="224.02" y="359.6" width="1.3" height="44.6" fill="#fa0000"/>
<rect x="232.55" y="359.6" width="1.3" height="44.6" fill="#fa0000"/>
<rect x="241.08" y="359.6" width="1.3" height="44.6" fill="#fa0000"/>
<rect x="249.62" y="359.6" width="1.3" height="44.6" fill="#fa0000"/>
<rect x="258.15" y="359.6" width="1.3" height="44.6" fill="#fa0000"/>
<rect x="266.68" y="359.6" width="1.3" height="44.6" fill="#fa0000"/>
<rect x="275.22" y="359.6" width="1.3" height="44.6" fill="#fa0000"/>
<rect x="283.75" y="359.6" width="1.3" height="44.6" fill="#fa0000"/>
<rect x="292.28" y="359.6" width="1.3" height="44.6" fill="#fa0000"/>
<rect x="300.82" y="359.6" width="1.3" height="44.6" fill="#fa0000"/>
<rect x="309.35" y="359.6" width="1.3" height="44.6" fill="#fa0000"/>
<rect x="317.88" y="359.6" width="1.3" height="44.6" fill="#fa0000"/>
<rect x="326.42" y="359.6" width="1.3" height="44.6" fill="#fa0000"/>
<rect x="334.95" y="359.6" width="1.3" height="44.6" fill="#fa0000"/>
<rect x="343.48" y="359.6" width="1.3" height="44.6" fill="#fa0000"/>
<rect x="352.02" y="359.6" width="1.3" height="44.6" fill="#fa0000"/>
<rect x="360.55" y="359.6" width="1.3" height="44.6" fill="#fa0000"/>
<rect x="369.08" y="359.6" width="1.3" height="44.6" fill="#fa0000"/>
<rect x="377.62" y="359.6" width="1.3" height="44.6" fill="#fa0000"/>
<rect x="386.15" y="359.6" width="1.3" height="44.6" fill="#fa0000"/>
<rect x="394.68" y="359.6" width="1.3" height="44.6" fill="#fa0000"/>
<rect x="403.22" y="359.6" width="1.3" height="44.6" fill="#fa0000"/>
<rect x="411.75" y="359.6" width="1.3" height="44.6" fill="#fa0000"/>
<rect x="420.28" y="359.6" width="1.3" height="44.6" fill="#fa0000"/>
<rect x="428.81" y="359.6" width="1.3" height="44.6" fill="#fa0000"/>
<rect x="437.35" y="359.6" width="1.3" height="44.6" fill="#fa0000"/>
<rect x="445.88" y="359.6" width="1.3" height="44.6" fill="#fa0000"/>
<rect x="454.41" y="359.6" width="1.3" height="44.6" fill="#fa0000"/>
<rect x="462.95" y="359.6" width="1.3" height="44.6" fill="#fa0000"/>
<rect x="471.48" y="359.6" width="1.3" height="44.6" fill="#fa0000"/>
<rect x="480.01" y="359.6" width="1.3" height="44.6" fill="#fa0000"/>
<rect x="488.55" y="359.6" width="1.3" height="44.6" fill="#fa0000"/>
<rect x="497.08" y="359.6" width="1.3" height="44.6" fill="#fa0000"/>
<rect x="505.61" y="359.6" width="1.3" height="44.6" fill="#fa0000"/>
<rect x="514.15" y="359.6" width="1.3" height="44.6" fill="#fa0000"/>
<rect x="522.68" y="359.6" width="1.3" height="44.6" fill="#fa0000"/>
<rect x="531.21" y="359.6" width="1.3" height="44.6" fill="#fa0000"/>
<rect x="539.75" y="359.6" width="1.3" height="44.6" fill="#fa0000"/>
<rect x="548.28" y="359.6" width="1.3" height="44.6" fill="#fa0000"/>
<rect x="556.81" y="359.6" width="1.3" height="44.6" fill="#fa0000"/>
<rect x="565.35" y="359.6" width="1.3" height="44.6" fill="#fa0000"/>
<rect x="573.88" y="359.6" width="1.3" height="44.6" fill="#fa0000"/>
<rect x="582.41" y="359.6" width="1.3" height="44.6" fill="#fa0000"/>
<rect x="590.95" y="359.6" width="1.3" height="44.6" fill="#fa0000"/>
<rect x="599.48" y="359.6" width="1.3" height="44.6" fill="#fa0000"/>
<rect x="608.01" y="359.6" width="1.3" height="44.6" fill="#fa0000"/>
<rect x="616.55" y="359.6" width="1.3" height="44.6" fill="#fa0000"/>
<rect x="625.08" y="359.6" width="1.3" height="44.6" fill="#fa0000"/>
<rect x="633.61" y="359.6" width="1.3" height="44.6" fill="#fa0000"/>
<rect x="642.15" y="359.6" width="1.3" height="44.6" fill="#fa0000"/>
<rect x="650.68" y="359.6" width="1.3" height="44.6" fill="#fa0000"/>
<rect x="659.21" y="359.6" width="1.3" height="44.6" fill="#fa0000"/>
<rect x="667.75" y="359.6" width="1.3" height="44.6" fill="#fa0000"/>
<rect x="676.28" y="359.6" width="1.3" height="44.6" fill="#fa0000"/>
<rect x="684.81" y="359.6" width="1.3" height="44.6" fill="#fa0000"/>
<rect x="693.35" y="359.6" width="1.3" height="44.6" fill="#fa0000"/>
<rect x="701.88" y="359.6" width="1.3" height="44.6" fill="#fa0000"/>
<rect x="710.41" y="359.6" width="1.3" height="44.6" fill="#fa0000"/>
<rect x="718.95" y="359.6" width="1.3" height="44.6" fill="#fa0000"/>
<rect x="727.48" y="359.6" width="1.3" height="44.6" fill="#fa0000"/>
<rect x="736.01" y="359.6" width="1.3" height="44.6" fill="#fa0000"/>
<rect x="744.55" y="359.6" width="1.3" height="44.6" fill="#fa0000"/>
<rect x="753.08" y="359.6" width="1.3" height="44.6" fill="#fa0000"/>
<rect x="761.61" y="359.6" width="1.3" height="44.6" fill="#fa0000"/>
<rect x="770.15" y="359.6" width="1.3" height="44.6" fill="#fa0000"/>
<rect x="778.68" y="359.6" width="1.3" height="44.6" fill="#fa0000"/>
<rect x="787.21" y="359.6" width="1.3" height="44.6" fill="#fa0000"/>
<rect x="795.75" y="359.6" width="1.3" height="44.6" fill="#fa0000"/>
<rect x="804.28" y="359.6" width="1.3" height="44.6" fill="#fa0000"/>
<rect x="812.81" y="359.6" width="1.3" height="44.6" fill="#fa0000"/>
<rect x="821.35" y="359.6" width="1.3" height="44.6" fill="#fa0000"/>
<rect x="829.88" y="359.6" width="1.3" height="44.6" fill="#fa0000"/>
<rect x="838.41" y="359.6" width="1.3" height="44.6" fill="#fa0000"/>
<rect x="846.95" y="359.6" width="1.3" height="44.6" fill="#fa0000"/>
<rect x="855.48" y="359.6" width="1.3" height="44.6" fill="#fa0000"/>
<rect x="864.01" y="359.6" width="1.3" height="44.6" fill="#fa0000"/>
<rect x="872.55" y="359.6" width="1.3" height="44.6" fill="#fa0000"/>
<rect x="881.08" y="359.6" width="1.3" height="44.6" fill="#fa0000"/>
<rect x="889.61" y="359.6" width="1.3" height="44.6" fill="#fa0000"/>
<rect x="898.15" y="359.6" width="1.3" height="44.6" fill="#fa0000"/>
<rect x="906.68" y="359.6" width="1.3" height="44.6" fill="#fa0000"/>
<rect x="915.21" y="359.6" width="1.3" height="44.6" fill="#fa0000"/>
<rect x="923.75" y="359.6" width="1.3" height="44.6" fill="#fa0000"/>
<rect x="932.28" y="359.6" width="1.3" height="44.6" fill="#fa0000"/>
<rect x="940.81" y="359.6" width="1.3" height="44.6" fill="#fa0000"/>
<rect x="949.35" y="359.6" width="1.3" height="44.6" fill="#fa0000"/>
<rect x="957.88" y="359.6" width="1.3" height="44.6" fill="#fa0000"/>
<rect x="966.41" y="359.6" width="1.3" height="44.6" fill="#fa0000"/>
<rect x="974.95" y="359.6" width="1.3" height="44.6" fill="#fa0000"/>
<rect x="983.48" y="359.6" width="1.3" height="44.6" fill="#fa0000"/>
</g>
<text x="5" y="368.6" font-size="9" fill="#dcdcdc" class="t" textLength="71" lengthAdjust="spacingAndGlyphs">M1Trend Boss 1.0000</text>
<text x="987.3" y="368.4" font-size="9" fill="#e0e0e0" class="t">1</text>
<text x="987.3" y="402.6" font-size="9" fill="#e0e0e0" class="t">0</text>
<path d="M243 369.7 L312 376.8" stroke="#ff0a84" stroke-width="3.4"/>
<path d="M328.8 378.5 L310.6 382.8 L310.8 370.8 Z" fill="#ff0a84"/>
<path d="M270.5 362.6 L267.4 372.4 L281.4 373.4 Z" fill="#ff0a84"/>
<g clip-path="url(#ci)">
<path d="M2 455.5 H984" stroke="#444c3c" stroke-width="1" stroke-dasharray="1.4 2.2"/>
<polyline points="2.5,431.8 12.5,429.5 25.0,428.0 37.5,426.2 50.0,425.0 62.5,424.2 100.0,424.2 130.0,424.2 140.0,425.5 162.5,425.0 200.0,425.0 225.0,425.5 232.5,426.2 240.0,426.8 255.0,425.2 270.0,424.0 285.0,426.0 300.0,428.5 315.0,430.5 330.0,431.8 345.0,432.2 360.0,431.0 375.0,429.8 390.0,428.0 402.5,425.5 415.0,424.2 440.0,424.2 480.0,424.5 505.0,424.2 525.0,422.5 545.0,421.5 565.0,421.8 585.0,423.8 605.0,425.5 630.0,426.2 655.0,426.8 680.0,427.5 705.0,428.0 736.0,428.2 771.0,428.2 791.0,431.2 811.0,434.5 831.0,436.8 851.0,437.5 871.0,436.8 891.0,435.8 911.0,433.2 931.0,434.5 951.0,433.0 966.0,432.5 984.0,432.5" fill="none" stroke="#a81226" stroke-width="1" stroke-dasharray="1.6 2.2"/>
<polyline points="2.5,479.2 12.5,479.5 25.0,481.2 37.5,483.8 45.0,485.0 62.5,485.8 100.0,486.2 125.0,485.8 150.0,485.0 200.0,485.0 225.0,484.5 240.0,484.8 265.0,485.5 285.0,484.8 302.5,481.8 320.0,479.2 340.0,478.5 360.0,478.5 375.0,479.8 390.0,482.2 405.0,484.8 420.0,486.0 440.0,486.0 465.0,485.5 480.0,485.5 505.0,486.8 530.0,488.2 555.0,489.2 570.0,488.0 592.5,485.8 617.5,484.5 642.5,483.2 667.5,482.5 736.0,482.0 761.0,481.2 778.5,480.8 796.0,477.5 816.0,475.0 836.0,473.5 873.5,473.5 898.5,474.5 916.0,477.0 931.0,475.8 951.0,477.0 984.0,478.2" fill="none" stroke="#1a7422" stroke-width="1" stroke-dasharray="1.6 2.2"/>
<polyline points="2.5,464.2 11.2,472.0 20.0,482.5 28.8,494.5 37.5,500.0 45.0,497.5 53.8,490.5 62.5,484.5 71.2,481.2 80.0,478.0 88.8,475.5 97.5,473.0 106.2,471.0 115.0,470.8 122.5,469.5 131.2,465.0 140.0,461.2 147.5,460.5 156.2,463.0 165.0,467.0 173.8,470.8 182.0,472.5 190.0,469.5 198.8,463.8 207.5,454.5 216.2,447.5 225.0,445.0 233.8,459.5 240.0,473.5 245.0,481.0 250.0,487.2 258.0,489.0 266.2,482.2 276.2,473.5 283.8,472.2 292.5,473.5 300.0,472.8 308.8,468.5 317.5,463.0 326.2,455.5 336.2,443.5 343.8,437.2 352.5,438.5 361.2,440.5 370.0,437.2 377.5,427.2 386.8,417.8 395.0,417.8 403.8,422.2 412.5,427.2 421.2,431.8 430.0,439.2 438.8,447.2 447.0,454.0 456.2,456.8 465.0,457.2 472.5,457.2 480.5,454.8 488.8,447.5 497.5,440.0 506.2,433.2 515.0,430.0 523.8,429.5 540.0,429.5 547.5,428.0 557.5,428.0 566.2,430.0 575.0,433.8 583.8,438.8 592.5,444.2 601.2,448.8 610.0,452.5 618.8,455.0 627.5,456.2 635.0,456.2 642.5,453.8 651.2,447.5 660.0,441.2 667.5,441.8 677.0,444.5 686.2,438.8 695.0,432.0 703.8,428.0 712.5,428.2 720.0,432.5 728.8,436.2 736.0,438.8 744.8,441.8 753.5,446.2 762.2,451.2 771.0,453.2 779.8,451.8 787.2,449.5 796.0,442.5 804.8,437.5 813.5,434.2 822.2,438.0 831.0,447.5 839.8,458.8 848.5,464.5 856.0,466.8 864.8,464.5 873.5,457.5 882.2,457.0 891.0,464.5 899.8,469.5 907.2,475.0 916.0,472.0 924.8,448.8 933.0,421.2 941.5,410.8 950.5,412.5 958.5,418.0 967.2,424.2 976.0,427.0 984.0,428.0" fill="none" stroke="#2088f0" stroke-width="1.25" stroke-linejoin="round"/>
</g>
<text x="5" y="414.6" font-size="9" fill="#dcdcdc" class="t" textLength="205" lengthAdjust="spacingAndGlyphs">OB/OS BOSS [8&gt;18&gt;63*1.60*1.60] 17.6951 97.4080 2.5920</text>
<path d="M253.6 418.2 L350 419.6" stroke="#ff0a84" stroke-width="3.4"/>
<path d="M366.8 419.8 L348.6 425.6 L348.8 413.4 Z" fill="#ff0a84"/>
<text x="987.5" y="414.4" font-size="9" fill="#e0e0e0" class="t" textLength="32.4" lengthAdjust="spacingAndGlyphs">125.8654</text>
<text x="987.5" y="458.6" font-size="9" fill="#e0e0e0" class="t" textLength="9" lengthAdjust="spacingAndGlyphs">50</text>
<text x="987.5" y="490.6" font-size="9" fill="#e0e0e0" class="t" textLength="17" lengthAdjust="spacingAndGlyphs">0.00</text>
<text x="987.5" y="503" font-size="9" fill="#e0e0e0" class="t" textLength="31" lengthAdjust="spacingAndGlyphs">-26.2263</text>
<path d="M2.5 500.4 V504 H6.4 Z" fill="#b8b8c0"/>
<rect x="2.50" y="504.5" width="1" height="2.2" fill="#b4b4bc"/>
<text x="2.70" y="514" font-size="9" fill="#e0e0e0" class="t" textLength="37" lengthAdjust="spacingAndGlyphs">1 Sep 2025</text>
<rect x="70.77" y="504.5" width="1" height="2.2" fill="#b4b4bc"/>
<text x="70.97" y="514" font-size="9" fill="#e0e0e0" class="t" textLength="40" lengthAdjust="spacingAndGlyphs">1 Sep 04:11</text>
<rect x="139.03" y="504.5" width="1" height="2.2" fill="#b4b4bc"/>
<text x="139.23" y="514" font-size="9" fill="#e0e0e0" class="t" textLength="40" lengthAdjust="spacingAndGlyphs">1 Sep 04:19</text>
<rect x="207.30" y="504.5" width="1" height="2.2" fill="#b4b4bc"/>
<text x="207.50" y="514" font-size="9" fill="#e0e0e0" class="t" textLength="40" lengthAdjust="spacingAndGlyphs">1 Sep 04:27</text>
<rect x="275.57" y="504.5" width="1" height="2.2" fill="#b4b4bc"/>
<text x="275.77" y="514" font-size="9" fill="#e0e0e0" class="t" textLength="40" lengthAdjust="spacingAndGlyphs">1 Sep 04:35</text>
<rect x="343.83" y="504.5" width="1" height="2.2" fill="#b4b4bc"/>
<text x="344.03" y="514" font-size="9" fill="#e0e0e0" class="t" textLength="40" lengthAdjust="spacingAndGlyphs">1 Sep 04:43</text>
<rect x="412.10" y="504.5" width="1" height="2.2" fill="#b4b4bc"/>
<text x="412.30" y="514" font-size="9" fill="#e0e0e0" class="t" textLength="40" lengthAdjust="spacingAndGlyphs">1 Sep 04:51</text>
<rect x="480.37" y="504.5" width="1" height="2.2" fill="#b4b4bc"/>
<text x="480.57" y="514" font-size="9" fill="#e0e0e0" class="t" textLength="40" lengthAdjust="spacingAndGlyphs">1 Sep 04:59</text>
<rect x="548.64" y="504.5" width="1" height="2.2" fill="#b4b4bc"/>
<text x="548.84" y="514" font-size="9" fill="#e0e0e0" class="t" textLength="40" lengthAdjust="spacingAndGlyphs">1 Sep 05:07</text>
<rect x="616.90" y="504.5" width="1" height="2.2" fill="#b4b4bc"/>
<text x="617.10" y="514" font-size="9" fill="#e0e0e0" class="t" textLength="40" lengthAdjust="spacingAndGlyphs">1 Sep 05:15</text>
<rect x="685.17" y="504.5" width="1" height="2.2" fill="#b4b4bc"/>
<text x="685.37" y="514" font-size="9" fill="#e0e0e0" class="t" textLength="40" lengthAdjust="spacingAndGlyphs">1 Sep 05:23</text>
<rect x="753.44" y="504.5" width="1" height="2.2" fill="#b4b4bc"/>
<text x="753.64" y="514" font-size="9" fill="#e0e0e0" class="t" textLength="40" lengthAdjust="spacingAndGlyphs">1 Sep 05:31</text>
<rect x="821.70" y="504.5" width="1" height="2.2" fill="#b4b4bc"/>
<text x="821.90" y="514" font-size="9" fill="#e0e0e0" class="t" textLength="40" lengthAdjust="spacingAndGlyphs">1 Sep 05:39</text>
<rect x="889.97" y="504.5" width="1" height="2.2" fill="#b4b4bc"/>
<text x="890.17" y="514" font-size="9" fill="#e0e0e0" class="t" textLength="40" lengthAdjust="spacingAndGlyphs">1 Sep 05:47</text>
<rect x="958.24" y="504.5" width="1" height="2.2" fill="#b4b4bc"/>
<text x="958.44" y="514" font-size="9" fill="#e0e0e0" class="t" textLength="40" lengthAdjust="spacingAndGlyphs">1 Sep 05:55</text>
</svg>
<div id="status" class="abs">
 <span style="left:1.3px;letter-spacing:-0.3px">For Help, press F1</span>
 <span style="left:461px">Default</span>
 <span style="left:949.5px;letter-spacing:0.2px">628/10 kb</span>
 <svg class="abs" style="left:0;top:0" width="1024" height="19" viewBox="0 0 1024 19">
  <g fill="#cfcfcf"><rect x="457" y="2" width="1" height="16"/><rect x="551" y="2" width="1" height="16"/><rect x="637" y="2" width="1" height="16"/><rect x="696" y="2" width="1" height="16"/><rect x="754" y="2" width="1" height="16"/><rect x="809.5" y="2" width="1" height="16"/><rect x="866" y="2" width="1" height="16"/><rect x="921.500" y="2" width="1" height="16"/></g>
  <g fill="#6e8f22"><rect x="924.80" y="4.4" width="1.7" height="7.50"/><rect x="927.42" y="4.4" width="1.7" height="6.55"/><rect x="930.04" y="4.4" width="1.7" height="5.60"/><rect x="932.66" y="4.4" width="1.7" height="4.65"/><rect x="935.28" y="4.4" width="1.7" height="3.70"/><rect x="937.90" y="4.4" width="1.7" height="2.75"/><rect x="940.52" y="4.4" width="1.7" height="1.80"/><rect x="943.14" y="4.4" width="1.7" height="0.85"/></g>
  <g fill="#1f557a"><rect x="924.80" y="12.50" width="1.7" height="2.80"/><rect x="927.42" y="11.55" width="1.7" height="3.75"/><rect x="930.04" y="10.60" width="1.7" height="4.70"/><rect x="932.66" y="9.65" width="1.7" height="5.65"/><rect x="935.28" y="8.70" width="1.7" height="6.60"/><rect x="937.90" y="7.75" width="1.7" height="7.55"/><rect x="940.52" y="6.80" width="1.7" height="8.50"/><rect x="943.14" y="5.85" width="1.7" height="9.45"/></g>
 </svg>
</div>
<div id="task" class="abs">
<svg class="abs" style="left:0;top:0" width="1024" height="38" viewBox="0 538 1024 38">
 <!-- windows logo -->
 <g fill="#4cc2ff"><rect x="307" y="548" width="8.8" height="8.8" fill="#5fd0ff"/><rect x="316.800" y="548" width="8.800" height="8.800" fill="#48baf6"/><rect x="307" y="557.800" width="8.800" height="8.800" fill="#3aa6ee"/><rect x="316.800" y="557.800" width="8.800" height="8.800" fill="#2f96e6"/></g>
 <!-- search pill -->
 <rect x="337.2" y="543.6" width="175.2" height="25.8" rx="12.9" fill="#49394a" stroke="#5e4e5c" stroke-width="0.7"/>
 <g fill="none" stroke="#ededed" stroke-width="1.2"><circle cx="351.4" cy="555.8" r="4.3"/><path d="M354.6 559 l3.200 3.400" stroke-linecap="round"/></g>
 <text x="366.600" y="561" font-size="11.200" fill="#dedede" class="t" textLength="32.400" lengthAdjust="spacingAndGlyphs">Search</text>
 <!-- search highlight emoji -->
 <g><path d="M471.400 556 q-2.600-1-1.400-4 q1.400-2.600 4.400-2 q2.400-1.400 4.600 .2 q3.400-.6 4.400 2.400 q.6 2.600-1.800 3.400 l-.4 5.600 q-4.600 1.800-9.400 0z" fill="#e6e0ee"/><path d="M471.800 560 q4.800 1.800 9.400 0" fill="none" stroke="#b8aec8" stroke-width="0.8"/>
 <path d="M489.600 548.600 q-3 5 -2.600 8.400 q.6 4 3.400 4.600" fill="none" stroke="#4f9cc0" stroke-width="1.200"/><path d="M492 548.600 q1.600 3 0 6" fill="none" stroke="#4f9cc0" stroke-width="1"/><circle cx="486.400" cy="563" r="1.600" fill="#7cc4e0"/>
 <path d="M494.400 560.600 q-.4-7.600 6.600-8.400 q7 .800 6.600 8.400z" fill="#f4c630"/><path d="M493.200 560.400 h15.600 q.8 2.600-1.600 2.600 h-12.400 q-2.400 0-1.600-2.600z" fill="#e2a81e"/></g>
 <!-- copilot -->
 <g><defs><linearGradient id="cp1" x1="0" y1="0" x2="1" y2="1"><stop offset="0" stop-color="#2a8cf0"/><stop offset="1" stop-color="#8a5cf0"/></linearGradient><linearGradient id="cp2" x1="1" y1="0" x2="0" y2="1"><stop offset="0" stop-color="#e04cc0"/><stop offset="0.55" stop-color="#f07a4a"/><stop offset="1" stop-color="#f6d24a"/></linearGradient></defs>
 <path d="M529.400 548.400 h4.200 q3 0 3.800 2.800 l1.200 4 q.6 2 2.200 2.400 q-1.600 4.600-4.800 4.600 h-1.600 q-2.200 0-2.800-2.400 l-2.400-8.600 q-.6-2.200 .2-2.800z" fill="url(#cp2)"/>
 <path d="M533 566 h-4.200 q-3 0-3.800-2.800 l-1.200-4 q-.6-2-2.200-2.400 q1.600-4.600 4.800-4.600 h1.600 q2.200 0 2.800 2.400 l2.400 8.600 q.6 2.200-.2 2.800z" fill="url(#cp1)"/>
 <path d="M527 549 q2-.8 3 2 l1.400 5 -3.600 .4 q-2-3.600-.8-7.400z" fill="#3ac0f0" fill-opacity="0.9"/></g>
 <!-- file explorer -->
 <g><path d="M557.200 549 q0-1.200 1.200-1.200 h5.600 l2 2 h9.400 q1.200 0 1.200 1.200 v2 h-19.400z" fill="#e8a022"/><rect x="557.200" y="550.800" width="19.400" height="15" rx="1.200" fill="#fcd45c"/><path d="M560.600 565.800 v-5 q0-1.300 1.300-1.300 h10.200 q1.300 0 1.300 1.300 v5z" fill="#2f86e0"/><rect x="563.200" y="561.600" width="7.600" height="1.300" rx="0.600" fill="#7cc0f8"/></g>
 <!-- edge -->
 <g><defs><linearGradient id="eg" x1="0.1" y1="1" x2="0.9" y2="0"><stop offset="0" stop-color="#0f52a6"/><stop offset="0.5" stop-color="#1f9be4"/><stop offset="0.85" stop-color="#43d58c"/><stop offset="1" stop-color="#6ae66a"/></linearGradient></defs>
 <circle cx="602.4" cy="556.5" r="9.7" fill="url(#eg)"/>
 <path d="M594.6 559.4 q-.6-7.400 6.600-8 q6.200-.2 7.400 4.800 q.4 2.600-2.200 2.800 h-4 q-1 4.200 4.600 5.800 q-9.400 3.600-12.400-5.400z" fill="#0d4fa0"/>
 <path d="M597.800 557.600 q.6-4.200 4.400-4.200 q3.400 0 3.800 3 q.2 1.200-1.200 1.200z" fill="#2cb0ea"/>
 <path d="M606.600 559.600 h5.400 q-.8 3-3.400 4.800 q-3.400-1.400-2-4.800z" fill="#3b1d24"/></g>
 <!-- ic markets -->
 <g><rect x="628" y="547.400" width="18.800" height="19.400" rx="1.500" fill="#050505"/><text x="636" y="558.400" font-size="7.600" font-weight="bold" fill="#2fc83a" class="t">IC</text><rect x="631.200" y="554" width="1" height="4" fill="#ddd"/><rect x="633" y="552.400" width="1" height="5.600" fill="#ddd"/><text x="630.400" y="563.600" font-size="3.600" fill="#eee" class="t">Markets</text></g>
 <!-- chart app -->
 <g><rect x="662.8" y="549.2" width="19.4" height="14.8" rx="1.6" fill="#2a78d0"/><path d="M663.600 564 v-6.400 l2.400-4.600 2 5 2.600-6.600 2.600 6 2.400-5 2.400 5.400 1.800-3 1.600 2.400 v6.800z" fill="#a8d8fa"/><path d="M663.600 557.600 l2.400-4.600 2 5 2.600-6.600 2.600 6 2.400-5 2.400 5.400 1.800-3 1.600 2.400" fill="none" stroke="#e8f6ff" stroke-width="0.9"/></g>
 <!-- telegram -->
 <g><circle cx="707.600" cy="557" r="8.800" fill="#2ca3de"/><path d="M702.600 557.200 l10.200-4.200 -1.700 9 -3.300-2.500 -1.700 1.700 -.2-2.900 4.800-4.400 -6 3.600z" fill="#fff"/><rect x="709.700" y="547.400" width="11.800" height="8.600" rx="2.600" fill="#e8404a"/><text x="712.400" y="554.400" font-size="6.600" fill="#fff" class="t">23</text><rect x="710.800" y="553.200" width="0.900" height="0.900" fill="#fff"/></g>
 <!-- running indicators -->
 <g fill="#8e848c"><rect x="565" y="570" width="4.600" height="1.800" rx="0.900"/><rect x="600" y="570" width="4.600" height="1.800" rx="0.900"/><rect x="635" y="570" width="4.600" height="1.800" rx="0.900"/><rect x="670" y="570" width="4.600" height="1.800" rx="0.900"/><rect x="706" y="570" width="4.600" height="1.800" rx="0.900"/></g>
 <!-- tray -->
 <path d="M827.600 558.400 l4.200-4.200 4.200 4.200" fill="none" stroke="#f0f0f0" stroke-width="1.100"/>
 <text x="852.800" y="560.400" font-size="9.800" fill="#f4f4f4" class="t" textLength="18.600" lengthAdjust="spacingAndGlyphs">ENG</text>
 <g fill="none" stroke="#f4f4f4" stroke-width="1.100" stroke-linecap="round"><path d="M886.400 554.400 a8.600 8.600 0 0 1 11.800 0"/><path d="M888.400 556.800 a5.600 5.600 0 0 1 7.800 0"/><path d="M890.400 559 a2.800 2.800 0 0 1 3.800 0"/><circle cx="892.300" cy="560.600" r="0.500" fill="#fff"/></g>
 <g fill="none" stroke="#f4f4f4" stroke-width="1" stroke-linejoin="round"><path d="M905.400 555 h2.400 l3-2.800 v9.200 l-3-2.800 h-2.400z"/><path d="M912.800 554.600 q1.800 2.200 0 4.600M914.800 552.800 q3.200 4 0 8.200" stroke-linecap="round"/></g>
 <g fill="none" stroke="#f4f4f4" stroke-width="1"><rect x="925.400" y="553.400" width="10.800" height="7" rx="1.600"/><path d="M937.400 555.600 v2.600" stroke-linecap="round"/><path d="M927.200 551.400 v3 h-1.800 M929 553 l-1.800-1.800" stroke-width="0.9"/></g>
 <text x="989.400" y="554" font-size="9.800" fill="#f4f4f4" class="t" text-anchor="end" textLength="34" lengthAdjust="spacingAndGlyphs">1:06 PM</text>
 <text x="989.400" y="566.600" font-size="9.800" fill="#f4f4f4" class="t" text-anchor="end">9/1/2025</text>
 <g><path d="M997.600 561 q1.600-1.600 1.600-5 q0-3.800 3.200-3.800 q3.200 0 3.200 3.800 q0 3.400 1.600 5z" fill="#f0f0f0"/><circle cx="1002.400" cy="562.600" r="1.300" fill="#f0f0f0"/><text x="1004.600" y="553.600" font-size="4" fill="#f0f0f0" class="t">z</text><text x="1000.600" y="558.800" font-size="4.400" fill="#3a1c20" class="t">z</text></g>
</svg>
</div>

<div id="rt" class="abs">
<svg class="abs" style="left:0;top:0" width="29" height="302" viewBox="995 0 29 302">
 <rect x="995.4" y="0" width="28.6" height="276.2" fill="#262a33"/>
 <rect x="995.4" y="276.2" width="27.3" height="25" fill="#030305"/>
 <path d="M1010.3 6.800 l7.900 7.900 M1018.200 6.800 l-7.900 7.900" stroke="#cfcfd4" stroke-width="1"/>
 <g fill="#16181e" stroke="#343a46" stroke-width="0.9">
  <rect x="999.500" y="21.300" width="20" height="20"/><rect x="999.500" y="46.300" width="20" height="20"/><rect x="999.500" y="69" width="20" height="20"/><rect x="999.500" y="91.500" width="20" height="20"/>
  <rect x="999.500" y="136.500" width="20" height="20"/><rect x="999.500" y="158.800" width="20" height="19.800"/><rect x="999.500" y="181.200" width="20" height="19.800"/><rect x="999.500" y="203.600" width="20" height="19.700"/>
  <rect x="999.500" y="234" width="20" height="19.600"/><rect x="999.500" y="256.300" width="20" height="20"/>
 </g>
 <rect x="999.200" y="113.800" width="20.600" height="20.500" fill="#3a96e8"/>
 <path d="M996.400 228.500 h26.200" stroke="#3c404c" stroke-width="1"/>
 <!-- cursor -->
 <path d="M1005.200 24.600 v12.400 l3-2.400 2 4.200 1.800-.8 -2-4.200 4-.4z" fill="#cfcfd2"/>
 <!-- pencil -->
 <g><path d="M1004.800 59.600 l8.600-8.400 2.800 2.800 -8.600 8.400z" fill="#cfcfd2"/><path d="M1006 60.800 l8.600-8.400 M1007.200 62 l8.600-8.400" stroke="#16181e" stroke-width="0.5"/><path d="M1013.800 50.800 l1-1 q.8-.6 1.600.2 l1.200 1.200 q.8.800 0 1.600 l-1 1z" fill="#cfcfd2"/><path d="M1002.600 64.600 l1.600-4.400 2.800 2.800z" fill="#cfcfd2"/></g>
 <!-- marker -->
 <g fill="#cfcfd2"><path d="M1009 78.800 l5.600-6 3.400 3 -5.600 6z"/><path d="M1006.600 81 l1.800-1.800 3.400 3 -1.800 1.800z"/><path d="M1002.200 85.600 l3.600-3.800 3.200 2.800 -1.400 1.400 h-4.400z"/></g>
 <!-- line -->
 <path d="M1003.800 107.400 L1015.600 96.400" stroke="#c8c8cc" stroke-width="2"/>
 <!-- arrow selected -->
 <path d="M1015.400 118.200 L1008 126.600" stroke="#fff" stroke-width="1.600"/><path d="M1003 130 l3.600-8.200 5.400 5z" fill="#fff"/>
 <!-- rect -->
 <rect x="1003.600" y="142.100" width="11.800" height="8.600" fill="none" stroke="#c8c8cc" stroke-width="1.300"/>
 <!-- 123 balls -->
 <g fill="#d4d4d8"><circle cx="1006.800" cy="165.600" r="3.400"/><circle cx="1013" cy="167.800" r="3.400"/><circle cx="1008" cy="172" r="3.600"/></g>
 <g font-size="4" fill="#16181e" class="t" font-weight="bold"><text x="1005.700" y="167">1</text><text x="1012" y="169.200">2</text><text x="1006.900" y="173.600">3</text></g>
 <!-- T -->
 <text x="1009.500" y="196.700" font-size="16.500" fill="#cfcfd2" text-anchor="middle" style="font-family:'Liberation Serif',serif">T</text>
 <!-- eraser -->
 <g><path d="M1003 215 l5.400-5.600 4.800 4.400 -5.400 5.600z" fill="#d4d4d8"/><path d="M1008.400 209.400 l2.600-2.600 q1-1 2 0 l2.800 2.600 q1 1 0 2 l-2.600 2.400z" fill="#6a6c74"/><path d="M1007 219.200 h6.400" stroke="#d4d4d8" stroke-width="1"/></g>
 <!-- color -->
 <rect x="1003.300" y="237.700" width="12.400" height="12.400" fill="#ff0a84" stroke="#8a6a7a" stroke-width="0.5"/>
 <!-- line width -->
 <rect x="1003" y="264.600" width="12.600" height="3.500" fill="#ececf0"/>
 <!-- arrows bar -->
 <rect x="995.900" y="281.800" width="26.400" height="19.200" fill="#030305" stroke="#3a3c44" stroke-width="0.8"/>
 <rect x="999.500" y="286.500" width="10.100" height="11.600" fill="#1a1c22" stroke="#32363e" stroke-width="0.600"/><rect x="1009.900" y="286.500" width="10.100" height="11.600" fill="#1a1c22" stroke="#32363e" stroke-width="0.600"/>
 <path d="M1001.600 292.400 l3.400-3 v1.900 h2.800 v2.200 h-2.800 v1.900z" fill="#cfcfd2"/><path d="M1018 292.400 l-3.400-3 v1.900 h-2.800 v2.200 h2.800 v1.900z" fill="#cfcfd2"/>
</svg>
</div>

</body></html>
